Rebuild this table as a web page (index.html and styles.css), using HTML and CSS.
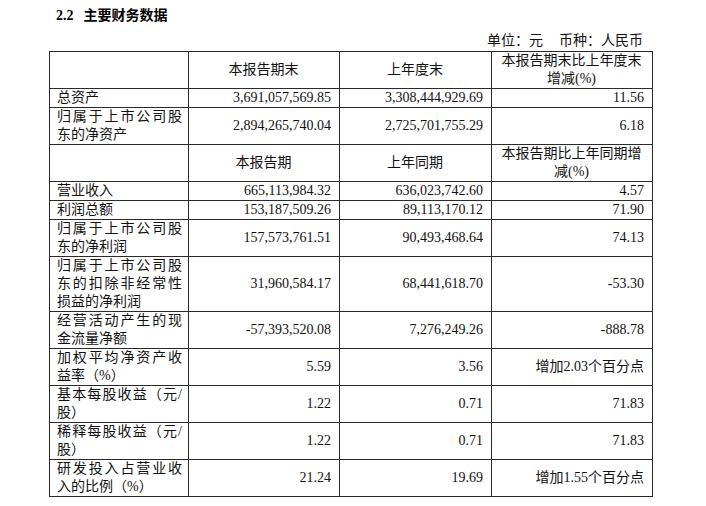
FILE: index.html
```html
<!DOCTYPE html>
<html lang="zh-CN">
<head>
<meta charset="utf-8">
<title>主要财务数据</title>
<link rel="stylesheet" href="styles.css">
</head>
<body>
<div class="page">
  <h2 class="title"><span class="num">2.2</span><span class="ttext">主要财务数据</span></h2>
  <div class="unit">单位：元<span class="gap">币种：人民币</span></div>
  <table class="fin">
    <colgroup>
      <col class="c1"><col class="c2"><col class="c3"><col class="c4">
    </colgroup>
    <tr>
      <th class="lab"></th>
      <th>本报告期末</th>
      <th>上年度末</th>
      <th>本报告期末比上年度末增减(%)</th>
    </tr>
    <tr>
      <td class="lab">总资产</td>
      <td>3,691,057,569.85</td>
      <td>3,308,444,929.69</td>
      <td>11.56</td>
    </tr>
    <tr>
      <td class="lab">归属于上市公司股东的净资产</td>
      <td>2,894,265,740.04</td>
      <td>2,725,701,755.29</td>
      <td>6.18</td>
    </tr>
    <tr>
      <th class="lab"></th>
      <th>本报告期</th>
      <th>上年同期</th>
      <th>本报告期比上年同期增减(%)</th>
    </tr>
    <tr>
      <td class="lab">营业收入</td>
      <td>665,113,984.32</td>
      <td>636,023,742.60</td>
      <td>4.57</td>
    </tr>
    <tr>
      <td class="lab">利润总额</td>
      <td>153,187,509.26</td>
      <td>89,113,170.12</td>
      <td>71.90</td>
    </tr>
    <tr>
      <td class="lab">归属于上市公司股东的净利润</td>
      <td>157,573,761.51</td>
      <td>90,493,468.64</td>
      <td>74.13</td>
    </tr>
    <tr>
      <td class="lab">归属于上市公司股东的扣除非经常性损益的净利润</td>
      <td>31,960,584.17</td>
      <td>68,441,618.70</td>
      <td>-53.30</td>
    </tr>
    <tr>
      <td class="lab">经营活动产生的现金流量净额</td>
      <td>-57,393,520.08</td>
      <td>7,276,249.26</td>
      <td>-888.78</td>
    </tr>
    <tr>
      <td class="lab">加权平均净资产收益率（%）</td>
      <td>5.59</td>
      <td>3.56</td>
      <td>增加2.03个百分点</td>
    </tr>
    <tr>
      <td class="lab">基本每股收益（元/股）</td>
      <td>1.22</td>
      <td>0.71</td>
      <td>71.83</td>
    </tr>
    <tr>
      <td class="lab">稀释每股收益（元/股）</td>
      <td>1.22</td>
      <td>0.71</td>
      <td>71.83</td>
    </tr>
    <tr>
      <td class="lab">研发投入占营业收入的比例（%）</td>
      <td>21.24</td>
      <td>19.69</td>
      <td>增加1.55个百分点</td>
    </tr>
  </table>
</div>
</body>
</html>
```
FILE: styles.css
```css
html, body {
  margin: 0;
  padding: 0;
  background: #ffffff;
}

body {
  font-family: "Liberation Serif", "Noto Sans CJK SC", serif;
  font-size: 14px;
  line-height: 18px;
  color: #111111;
}

.page {
  width: 603px;
  margin-left: 49px;
  padding-top: 5px;
}

.title {
  margin: 0;
  padding-left: 7px;
  font-size: 14px;
  line-height: 18px;
  font-weight: bold;
  color: #000000;
}

.title .num {
  font-family: "Liberation Serif", serif;
}

.title .ttext {
  margin-left: 10px;
  font-family: "Noto Sans CJK SC", sans-serif;
}

.unit {
  margin-top: 7px;
  padding-right: 9px;
  text-align: right;
  line-height: 18px;
}

.unit .gap {
  margin-left: 16px;
}

.fin {
  margin-top: 1px;
  width: 603px;
  table-layout: fixed;
  border-collapse: collapse;
}

.c1 { width: 139px; }
.c2 { width: 151px; }
.c3 { width: 152px; }
.c4 { width: 161px; }

.fin th,
.fin td {
  border: 1px solid #2a2a2a;
  padding: 0 8px 0 7px;
  vertical-align: middle;
  text-align: right;
  font-weight: normal;
  line-height: 18px;
}

.fin th {
  text-align: center;
  height: 36px;
}

.fin td.lab,
.fin th.lab {
  text-align: justify;
  padding: 0 6px 0 7px;
}
```
